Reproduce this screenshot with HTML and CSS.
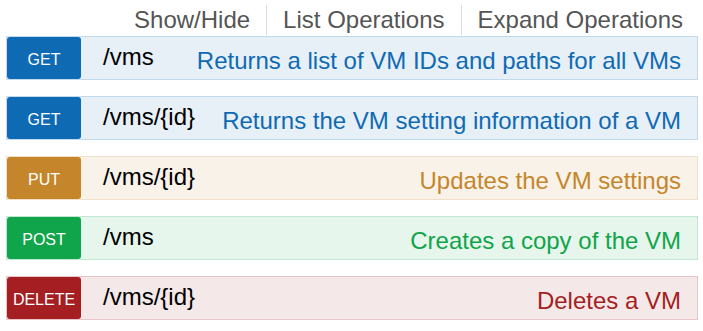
FILE: index.html
```html
<!DOCTYPE html>
<html>
<head>
<meta charset="utf-8">
<link rel="stylesheet" href="styles.css">
</head>
<body>
<div class="page">
  <ul class="actions">
    <li class="action">Show/Hide</li>
    <li class="action">List Operations</li>
    <li class="action">Expand Operations</li>
  </ul>
  <div class="ops">
    <div class="op op-get">
      <span class="method">GET</span>
      <span class="path">/vms</span>
      <span class="desc">Returns a list of VM IDs and paths for all VMs</span>
    </div>
    <div class="op op-get">
      <span class="method">GET</span>
      <span class="path">/vms/{id}</span>
      <span class="desc">Returns the VM setting information of a VM</span>
    </div>
    <div class="op op-put">
      <span class="method">PUT</span>
      <span class="path">/vms/{id}</span>
      <span class="desc">Updates the VM settings</span>
    </div>
    <div class="op op-post">
      <span class="method">POST</span>
      <span class="path">/vms</span>
      <span class="desc">Creates a copy of the VM</span>
    </div>
    <div class="op op-delete">
      <span class="method">DELETE</span>
      <span class="path">/vms/{id}</span>
      <span class="desc">Deletes a VM</span>
    </div>
  </div>
</div>
</body>
</html>
```
FILE: styles.css
```css
html, body {
  margin: 0;
  padding: 0;
  background: #ffffff;
}

body {
  font-family: "Liberation Sans", Arial, sans-serif;
}

.page {
  padding: 5px 5px 0 6px;
}

.actions {
  list-style: none;
  margin: 0 0 1px 0;
  padding: 0;
  display: flex;
  justify-content: flex-end;
}

.action {
  font-size: 24px;
  line-height: 30px;
  color: #555555;
  padding: 0 16px;
}

.action + .action {
  border-left: 1px solid #dddddd;
}

.action:last-child {
  padding-right: 15px;
}

.ops {
  display: flex;
  flex-direction: column;
  gap: 16px;
}

.op {
  display: flex;
  align-items: center;
  height: 44px;
  box-sizing: border-box;
  border: 1px solid;
}

.method {
  flex: 0 0 74px;
  align-self: stretch;
  display: flex;
  align-items: center;
  justify-content: center;
  padding-top: 3px;
  box-sizing: border-box;
  border-radius: 3px;
  color: #ffffff;
  font-size: 16px;
  margin-left: 0;
}

.path {
  margin-left: 22px;
  font-size: 24px;
  line-height: 26px;
  color: #000000;
  padding-bottom: 2px;
}

.desc {
  margin-left: auto;
  padding-right: 16px;
  padding-top: 5px;
  font-size: 24px;
  line-height: 26px;
}

.op-get { background: #e7f0f7; border-color: #c3d9ec; }
.op-get .method { background: #0f6ab4; }
.op-get .desc { color: #0f6ab4; }

.op-put { background: #f9f2e9; border-color: #f0e0ca; }
.op-put .method { background: #c5862b; }
.op-put .desc { color: #c5862b; }

.op-post { background: #e7f6ec; border-color: #c3e8d1; }
.op-post .method { background: #10a54a; }
.op-post .desc { color: #10a54a; }

.op-delete { background: #f5e8e8; border-color: #e8c6c7; }
.op-delete .method { background: #a41e22; }
.op-delete .desc { color: #a41e22; }
```
